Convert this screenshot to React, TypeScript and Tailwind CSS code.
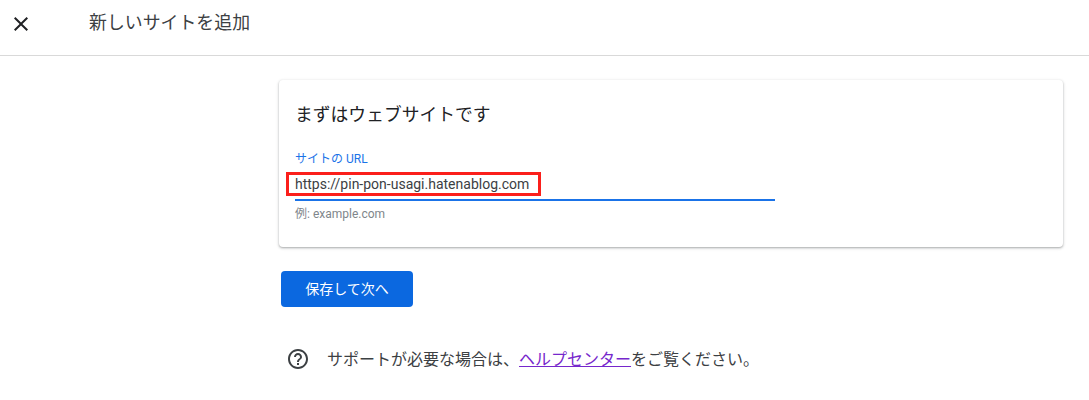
const JP = "font-['Roboto','Noto_Sans_CJK_JP',sans-serif]";

export default function App() {
  return (
    <div className={`${JP} min-h-[400px] bg-white text-[#3c4043] overflow-hidden`}>
      <header className="h-14 border-b border-[#d9d9d9] flex items-start">
        <button className="w-[42px] h-[48px] flex items-center justify-center shrink-0 text-[#202124]">
          <svg width="24" height="24" viewBox="0 0 24 24" fill="currentColor">
            <path d="M19 6.41 17.59 5 12 10.59 6.41 5 5 6.41 10.59 12 5 17.59 6.41 19 12 13.41 17.59 19 19 17.59 13.41 12z" />
          </svg>
        </button>
        <h1 className="ml-[47px] mt-[12px] text-[17.9px] leading-[22px] font-normal text-[#3c4043]">新しいサイトを追加</h1>
      </header>

      <main className="pl-[279px] pr-[26px] pt-6">
        <section className="h-[167px] rounded bg-white px-4 pt-[25px] shadow-[0_1px_2px_rgba(60,64,67,0.35),0_1px_3px_1px_rgba(60,64,67,0.1)]">
          <h2 className="text-[17.8px] leading-5 font-normal text-[#202124]">まずはウェブサイトです</h2>
          <div className="w-[480px] mt-[26px]">
            <label className="block text-[12px] leading-4 text-[#1a73e8]">サイトの URL</label>
            <div className="relative mt-[4px] h-[30px] border-b-2 border-[#1a73e8] text-[14px] leading-[26px] text-[#3c4043]">
              https://pin-pon-usagi.hatenablog.com
              <span className="absolute left-[-9px] top-[1px] w-[255px] h-[24px] border-[3px] border-[#fb1f1b]" />
            </div>
            <p className="mt-[5px] text-[12px] leading-4 text-[#80868b]">例: example.com</p>
          </div>
        </section>

        <button className="mt-6 ml-[2px] w-[132px] h-9 rounded bg-[#0b68e0] text-white text-[14px] block">保存して次へ</button>

        <div className="mt-[40px] ml-[7px] flex items-center h-6">
          <svg width="24" height="24" viewBox="0 0 24 24" fill="#3c4043" className="shrink-0">
            <path d="M11 18h2v-2h-2v2zm1-16C6.48 2 2 6.48 2 12s4.48 10 10 10 10-4.48 10-10S17.52 2 12 2zm0 18c-4.41 0-8-3.59-8-8s3.59-8 8-8 8 3.59 8 8-3.59 8-8 8zm0-14c-2.21 0-4 1.79-4 4h2c0-1.1.9-2 2-2s2 .9 2 2c0 2-3 1.75-3 5h2c0-2.25 3-2.5 3-5 0-2.21-1.79-4-4-4z" />
          </svg>
          <p className="ml-[17px] pt-[1px] text-[16px] leading-6 text-[#3c4043]">
            サポートが必要な場合は、<a href="#" className="text-[#7627cc] underline">ヘルプセンター</a>をご覧ください。
          </p>
        </div>
      </main>
    </div>
  );
}
